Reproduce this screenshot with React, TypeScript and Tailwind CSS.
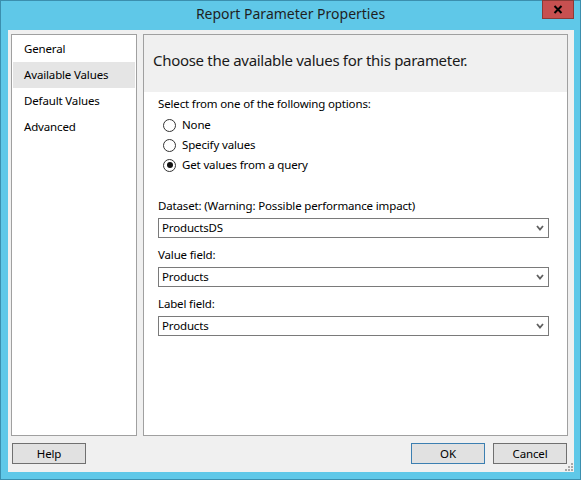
import React from "react";

const navItems = ["General", "Available Values", "Default Values", "Advanced"];

function Radio({ label, checked }: { label: string; checked?: boolean }) {
  return (
    <div className="h-[20px] flex items-center pl-[5px] gap-[6px]">
      <span className="w-[13px] h-[13px] rounded-full border border-[#333333] bg-white flex items-center justify-center">
        {checked && <span className="w-[6px] h-[6px] rounded-full bg-[#111111]" />}
      </span>
      <span>{label}</span>
    </div>
  );
}

function Combo({ value }: { value: string }) {
  return (
    <div className="mt-[4px] w-[391px] h-[20px] border border-[#7a7a7a] bg-white flex items-center justify-between pl-[3px] pr-[4px]">
      <span>{value}</span>
      <svg width="8" height="6" viewBox="0 0 8 6">
        <polyline points="1,1 4,4.5 7,1" fill="none" stroke="#606060" strokeWidth="1.8" />
      </svg>
    </div>
  );
}

function Btn({ label, primary }: { label: string; primary?: boolean }) {
  return (
    <button
      className={
        "w-[74px] h-[21px] bg-[#e1e1e1] border flex items-center justify-center " +
        (primary ? "border-[#3c7fb1]" : "border-[#707070]")
      }
    >
      {label}
    </button>
  );
}

export default function App() {
  return (
    <div className="w-[581px] h-[480px] flex flex-col bg-[#5fc8e8] border border-[#3b8fae] font-['Noto_Sans',sans-serif] text-[11.5px] tracking-[-0.15px] text-black select-none">
      {/* title bar */}
      <div className="relative h-[29px] flex items-center justify-center pb-[4px] text-[14px] tracking-normal text-[#1f1f1f]">
        Report Parameter Properties
        <div className="absolute right-[6px] top-[-1px] w-[32px] h-[19px] bg-[#c75050] border border-[#8c3a36] flex items-center justify-center">
          <svg width="10" height="9" viewBox="0 0 10 9">
            <path d="M1.5 1 L8.5 8 M8.5 1 L1.5 8" stroke="#000" strokeWidth="2" />
          </svg>
        </div>
      </div>

      {/* client area */}
      <div className="relative flex-1 ml-[7px] mr-[6px] mb-[7px] bg-[#f0f0f0] flex flex-col pt-[4px] pl-[3px] pr-[6px]">
        <div className="h-[402px] flex gap-[6px]">
          <div className="w-[126px] border border-[#a0a0a0] bg-white pt-[1px]">
            {navItems.map((n) => (
              <div
                key={n}
                className={
                  "h-[26px] mx-[1px] flex items-center pl-[11px] " +
                  (n === "Available Values" ? "bg-[#e5e5e5]" : "")
                }
              >
                {n}
              </div>
            ))}
          </div>

          <div className="flex-1 border border-[#a0a0a0] bg-white flex flex-col">
            <div className="h-[57px] bg-[#f0f0f0] pl-[9px] pt-[14px] leading-[22px] text-[15px] tracking-[-0.3px] text-[#1a1a1a]">
              Choose the available values for this parameter.
            </div>
            <div className="px-[14px] pt-[4px] flex flex-col leading-[16px]">
              <div>Select from one of the following options:</div>
              <div className="mt-[3px]">
                <Radio label="None" />
                <Radio label="Specify values" />
                <Radio label="Get values from a query" checked />
              </div>
              <div className="mt-[23px]">Dataset: (Warning: Possible performance impact)</div>
              <Combo value="ProductsDS" />
              <div className="mt-[9px]">Value field:</div>
              <Combo value="Products" />
              <div className="mt-[9px]">Label field:</div>
              <Combo value="Products" />
            </div>
          </div>
        </div>

        <div className="mt-[7px] flex items-center justify-between pl-[1px] pr-[1px]">
          <Btn label="Help" />
          <div className="flex gap-[8px]">
            <Btn label="OK" primary />
            <Btn label="Cancel" />
          </div>
        </div>

        {/* size grip */}
        <svg className="absolute right-[1px] bottom-[1px]" width="10" height="10" viewBox="0 0 10 10">
          <g fill="#a8a8a8">
            <rect x="8" y="2" width="2" height="2" />
            <rect x="5" y="5" width="2" height="2" />
            <rect x="8" y="5" width="2" height="2" />
            <rect x="2" y="8" width="2" height="2" />
            <rect x="5" y="8" width="2" height="2" />
            <rect x="8" y="8" width="2" height="2" />
          </g>
        </svg>
      </div>
    </div>
  );
}
